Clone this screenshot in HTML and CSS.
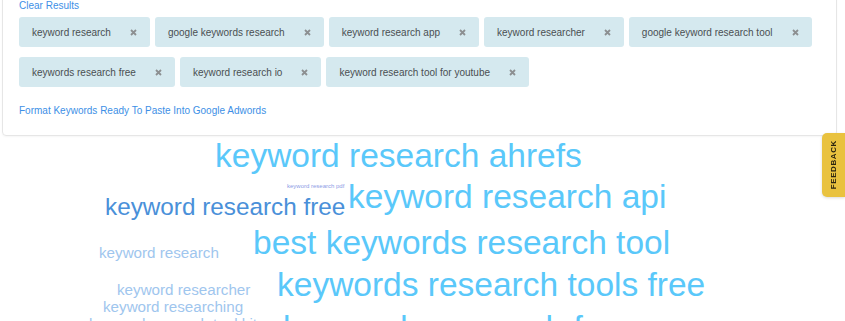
FILE: index.html
```html
<!DOCTYPE html>
<html lang="en">
<head>
  <meta charset="UTF-8" />
  <meta name="viewport" content="width=device-width, initial-scale=1.0"/>
  <title>Keyword Research Results</title>
  <link rel="stylesheet" href="styles.css">
</head>
<body>
  <!-- Panel hasil -->
  <div class="panel">
    <a class="link" href="#">Clear Results</a>
    <div class="tags">
      <span class="tag">keyword research<svg class="x" viewBox="0 0 7 7"><path d="M1 1L6 6M6 1L1 6"/></svg></span>
      <span class="tag">google keywords research<svg class="x" viewBox="0 0 7 7"><path d="M1 1L6 6M6 1L1 6"/></svg></span>
      <span class="tag">keyword research app<svg class="x" viewBox="0 0 7 7"><path d="M1 1L6 6M6 1L1 6"/></svg></span>
      <span class="tag">keyword researcher<svg class="x" viewBox="0 0 7 7"><path d="M1 1L6 6M6 1L1 6"/></svg></span>
      <span class="tag">google keyword research tool<svg class="x" viewBox="0 0 7 7"><path d="M1 1L6 6M6 1L1 6"/></svg></span>
      <span class="tag">keywords research free<svg class="x" viewBox="0 0 7 7"><path d="M1 1L6 6M6 1L1 6"/></svg></span>
      <span class="tag">keyword research io<svg class="x" viewBox="0 0 7 7"><path d="M1 1L6 6M6 1L1 6"/></svg></span>
      <span class="tag">keyword research tool for youtube<svg class="x" viewBox="0 0 7 7"><path d="M1 1L6 6M6 1L1 6"/></svg></span>
    </div>
    <a class="link format" href="#">Format Keywords Ready To Paste Into Google Adwords</a>
  </div>

  <!-- Word cloud -->
  <div class="cloud">
    <span class="word big" style="left:215px; top:3px">keyword research ahrefs</span>
    <span class="word pdf" style="left:287px; top:47px">keyword research pdf</span>
    <span class="word big" style="left:348px; top:44px">keyword research api</span>
    <span class="word mid" style="left:105px; top:59px">keyword research free</span>
    <span class="word big" style="left:253px; top:90px">best keywords research tool</span>
    <span class="word small" style="left:99px; top:109px">keyword research</span>
    <span class="word big" style="left:277px; top:132px">keywords research tools free</span>
    <span class="word small" style="left:117px; top:146px">keyword researcher</span>
    <span class="word small" style="left:103px; top:163px">keyword researching</span>
    <span class="word big" style="left:283px; top:175px">keywords research free</span>
    <span class="word small" style="left:89px; top:180px">keyword research tool kit</span>
  </div>

  <a class="feedback" href="#"><span>FEEDBACK</span></a>
</body>
</html>
```

FILE: styles.css
```css
body {
  margin: 0;
  font-family: "Liberation Sans", Arial, sans-serif;
  background: #fff;
  overflow: hidden;
}

.panel {
  margin: -12px 8px 0 2px;
  padding: 10px 16px 17px 16px;
  border: 1px solid #e6e6e6;
  border-radius: 4px;
  box-shadow: 0 1px 2px rgba(0, 0, 0, 0.04);
}

.link {
  display: block;
  font-size: 10px;
  line-height: 14px;
  color: #3d8fe6;
  text-decoration: none;
}

.format {
  margin-top: 17px;
}

.tags {
  display: flex;
  flex-wrap: wrap;
  gap: 10px 5px;
  margin-top: 4px;
}

.tag {
  display: inline-flex;
  align-items: center;
  height: 30px;
  padding: 0 13px 0 13px;
  background: #d5e9ef;
  border-radius: 3px;
  font-size: 10px;
  color: #4a4f52;
}

.x {
  width: 7px;
  height: 7px;
  margin-left: 19px;
  stroke: #8c8f91;
  stroke-width: 1.8;
  fill: none;
}

.cloud {
  position: relative;
  height: 190px;
}

.word {
  position: absolute;
  white-space: nowrap;
  line-height: 1;
}

.big {
  font-size: 33.5px;
  color: #5ac8fa;
}

.mid {
  font-size: 24.3px;
  color: #4a90d9;
}

.small {
  font-size: 15.2px;
  color: #9fc6ee;
}

.pdf {
  font-size: 6px;
  color: #8c9ce6;
}

.feedback {
  position: fixed;
  right: 0;
  top: 133px;
  width: 23px;
  height: 64px;
  background: #e9c23f;
  border-radius: 5px 0 0 5px;
  box-shadow: 0 1px 3px rgba(0, 0, 0, 0.15);
  display: flex;
  align-items: center;
  justify-content: center;
  text-decoration: none;
}

.feedback span {
  writing-mode: vertical-rl;
  transform: rotate(180deg);
  color: #2a2410;
  font-size: 8px;
  font-weight: bold;
  letter-spacing: 0.6px;
}
```
